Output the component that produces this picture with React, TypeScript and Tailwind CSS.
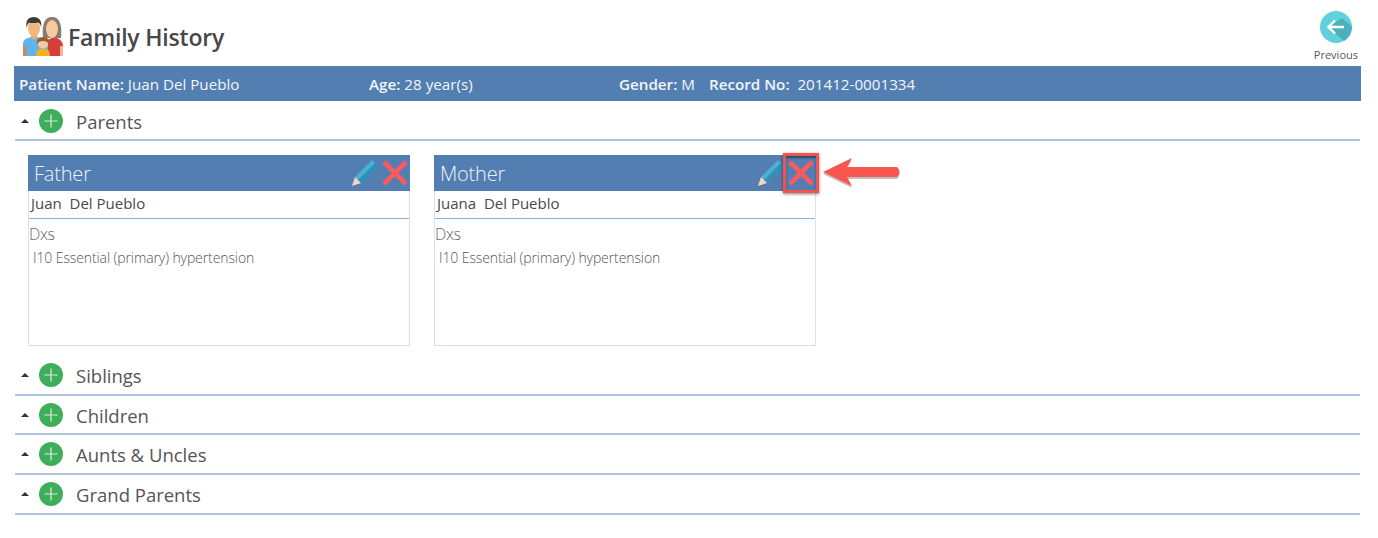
import React from "react";

const FONT = "font-['Open_Sans','Noto_Sans',sans-serif]";

const FamilyIcon = () => (
    <svg width="42" height="42" viewBox="0 0 42 42">
        {/* mother */}
        <path d="M21 23 Q19 2 30 2 Q41 2 39 23 Z" fill="#8a7b70"/>
        <path d="M25 25 L30 23 L35 23 Q40 25 41 30 L41 41 L25 41Z" fill="#d33f3c"/>
        <path d="M38 31 h3 v10 h-3z" fill="#eeb98a"/>
        <ellipse cx="30" cy="14" rx="6" ry="9" fill="#f6c9a0"/>
        {/* father */}
        <path d="M1 41 L1 29 Q1 24 6 23 L9 22 L16 22 L21 24 L26 30 L26 41 Z" fill="#5fb4ea"/>
        <path d="M1 31 h3.5 v10 h-3.5z" fill="#c98a5e"/>
        <path d="M9 17 h6 v6 l-3 2 l-3 -2z" fill="#e3a873"/>
        <ellipse cx="12" cy="13" rx="6" ry="9" fill="#f1b780"/>
        <path d="M4.5 13 Q3 2 12 2 Q20 2 19.5 13 Q18.5 8 16 7.5 Q10 8.5 7 7.5 Q5.5 9 4.5 13Z" fill="#3d3a37"/>
        {/* child */}
        <path d="M14 41 Q14 35 18 34 L24 34 Q28 35 28 41Z" fill="#f6b21e"/>
        <circle cx="21" cy="28" r="5.5" fill="#f6c9a0"/>
        <path d="M15 30 Q14 22 21 22 Q28 22 27 30 Q26 26 21 26 Q16 26 15 30Z" fill="#9a5a30"/>
    </svg>
);

const PlusIcon = () => (
    <svg width="24" height="24" viewBox="0 0 24 24" className="shrink-0">
        <circle cx="12" cy="12" r="12" fill="#3fae5a"/>
        <path d="M12 5.5v13M5.5 12h13" stroke="#d5efdb" strokeWidth="1.2"/>
    </svg>
);

const Caret = () => (
    <svg width="8" height="4" viewBox="0 0 8 4" className="shrink-0">
        <path d="M0 4 L4 0 L8 4Z" fill="#333"/>
    </svg>
);

const Pencil = () => (
    <svg width="26" height="26" viewBox="0 0 26 26">
        <path d="M20 0 L26 6 L9 23 L3 17Z" fill="#2a93bd"/>
        <path d="M20 0 L23 3 L6 20 L3 17Z" fill="#4fafd3"/>
        <path d="M3 17 L9 23 L0 26Z" fill="#f7d3c0"/>
    </svg>
);

const Cross = () => (
    <svg width="26" height="26" viewBox="0 0 26 26">
        <path d="M2 2 L24 24 M24 2 L2 24" stroke="#fb5a5f" strokeWidth="4.6"/>
    </svg>
);

const PersonCard = ({relation, name}: { relation: string; name: string }) => (
    <div className="w-[382px] h-[191px] border border-[#dcdfe3] border-t-0 flex flex-col">
        <div className="h-[36px] bg-[#527eb2] flex items-center justify-between pl-[6px] pr-[2px] -mx-px">
            <span className="mt-[2px] text-[20px] font-light text-[#eef2f7] tracking-[-0.2px]">{relation}</span>
            <div className="flex items-center gap-[4px]">
                <Pencil/>
                <Cross/>
            </div>
        </div>
        <div className="h-[28px] border-b border-[#8fb0d6] pl-[2px] pb-[2px] flex items-center text-[15px] text-[#4a4a4a] whitespace-pre">
            {name}
        </div>
        <div className="pt-[4px] text-[#666]">
            <div className="text-[16px] font-light leading-[22px] tracking-[-0.4px]">Dxs</div>
            <div className="text-[14px] font-light leading-[25px] pl-[4px] text-[#555] tracking-[-0.1px]">I10 Essential (primary) hypertension</div>
        </div>
    </div>
);

const SectionHead = ({label, height}: { label: string; height: string }) => (
    <div className={`${height} border-b-2 border-[#b0c2de] flex items-center pl-[6px]`}>
        <Caret/>
        <span className="ml-[10px] flex"><PlusIcon/></span>
        <span className="ml-[13px] mt-[2px] text-[18.5px] text-[#555]">{label}</span>
    </div>
);

export default function App() {
    return (
        <div className={`w-[1378px] h-[538px] bg-white relative overflow-hidden ${FONT}`}>
            <div className="h-[66px] pl-[22px] pr-[20px] flex justify-between">
                <div className="flex items-center pt-[6px] gap-[4px]">
                    <FamilyIcon/>
                    <h1 className="mt-[3px] text-[23px] font-semibold text-[#484848] tracking-[-0.2px]">Family History</h1>
                </div>
                <div className="flex flex-col items-center pt-[11px]">
                    <svg width="32" height="32" viewBox="0 0 32 32">
                        <circle cx="16" cy="16" r="16" fill="#62d0da"/>
                        <path d="M9 16 L16 23 L24 30 Q31 26 32 16 L22 7Z" fill="#4ab0bb"/>
                        <path d="M24 16H9M15 9.5L8.5 16l6.5 6.5" stroke="#fff" strokeWidth="2.4" fill="none"/>
                    </svg>
                    <span className="text-[11px] text-[#555] leading-[20px] mt-[2px]">Previous</span>
                </div>
            </div>
            <div className="mx-[14px] w-[1347px] h-[35px] pt-[1px] bg-[#527eb2] flex items-center text-[15.2px] text-[#f2f5f9] pl-[5px]">
                <span className="w-[350px]"><b className="font-semibold">Patient Name:</b> Juan Del Pueblo</span>
                <span className="w-[250px]"><b className="font-semibold">Age:</b> 28 year(s)</span>
                <span className="w-[90px]"><b className="font-semibold">Gender:</b> M</span>
                <span><b className="font-semibold">Record No:</b>&nbsp; 201412-0001334</span>
            </div>
            <div className="ml-[15px] w-[1345px]">
                <SectionHead label="Parents" height="h-[40px] pt-[2px]"/>
                <div className="h-[215px] pl-[13px] pt-[14px] flex gap-[24px]">
                    <PersonCard relation="Father" name="Juan  Del Pueblo"/>
                    <PersonCard relation="Mother" name="Juana  Del Pueblo"/>
                </div>
                <SectionHead label="Siblings" height="h-[40px]"/>
                <SectionHead label="Children" height="h-[39px]"/>
                <SectionHead label="Aunts & Uncles" height="h-[40px]"/>
                <SectionHead label="Grand Parents" height="h-[40px]"/>
            </div>
            {/* annotation over the screenshot */}
            <div className="absolute left-[783px] top-[153px] w-[36px] h-[40px] border-[3px] border-[#f0544f] shadow-[0_1px_3px_rgba(0,0,0,0.5),inset_0_2px_2px_rgba(0,0,0,0.45)]"/>
            <svg className="absolute left-[820px] top-[155px]" width="84" height="36" viewBox="0 0 84 36">
                <path d="M3 17 L32 3 L27 12 L77 12 Q82 17 77 22 L27 22 L32 31Z" fill="#000" opacity="0.25" transform="translate(0 2)"/>
                <path d="M3 17 L32 3 L27 12 L77 12 Q82 17 77 22 L27 22 L32 31Z" fill="#f9554f"/>
            </svg>
        </div>
    );
}
